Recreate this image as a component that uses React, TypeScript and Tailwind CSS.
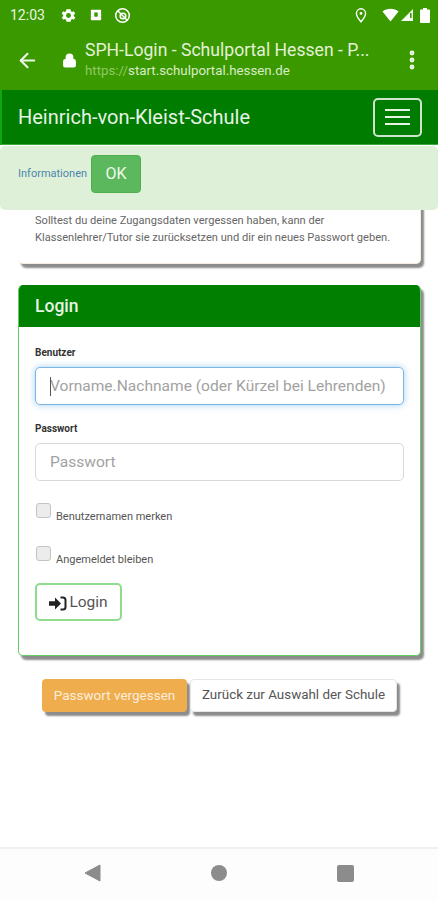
// App.tsx
import { ArrowLeft, Lock, MoreVertical } from "lucide-react";

const font = { fontFamily: "Roboto, 'Liberation Sans', sans-serif" };

function StatusBar() {
  return (
    <div className="h-[30px] bg-[#3b9900] flex items-center pl-[10px] pr-[8px] text-white">
      <span className="text-[14px] leading-none text-[#eaf5e0] w-[39px]">12:03</span>
      <svg className="ml-[11px]" width="17" height="17" viewBox="0 0 24 24" fill="#fff">
        <path d="M19.4 13a7.5 7.5 0 0 0 0-2l2.1-1.6-2-3.5-2.5 1a7.6 7.6 0 0 0-1.700-1L15 3.200h-6l-.4 2.700a7.6 7.6 0 0 0-1.700 1l-2.500-1-2 3.500L4.600 11a7.500 7.500 0 0 0 0 2l-2.100 1.600 2 3.500 2.500-1a7.600 7.600 0 0 0 1.700 1l.4 2.700h6l.4-2.700a7.600 7.600 0 0 0 1.700-1l2.500 1 2-3.500zM12 15.500a3.500 3.500 0 1 1 0-7 3.500 3.500 0 0 1 0 7z" />
      </svg>
      <svg className="ml-[13px]" width="12" height="12" viewBox="0 0 14 14">
        <rect x="1" y="1" width="12" height="12" rx="1" fill="#fff" />
        <rect x="5" y="4" width="4" height="5" fill="#3b9900" />
      </svg>
      <svg className="ml-[12px]" width="17" height="17" viewBox="0 0 18 18" fill="none" stroke="#fff" strokeWidth="1.6">
        <circle cx="9" cy="9" r="7.2" />
        <circle cx="9.500" cy="9.500" r="3" />
        <path d="M4 4l10 10" />
      </svg>
      <div className="ml-auto flex items-center">
        <svg width="14" height="16" viewBox="0 0 14 16" fill="none" stroke="#fff" strokeWidth="1.4">
          <path d="M7 14.800C4.500 11.600 2.400 9.200 2.400 6.400a4.600 4.600 0 0 1 9.200 0c0 2.800-2.100 5.200-4.600 8.400z" />
          <circle cx="7" cy="6.400" r="1.400" fill="#fff" stroke="none" />
        </svg>
        <svg className="ml-[14px]" width="17" height="14" viewBox="0 0 17 14" fill="#fff">
          <path d="M8.500 13.500L0.500 3.600C2.700 1.800 5.400 0.800 8.500 0.800s5.800 1 8 2.800z" />
        </svg>
        <svg className="ml-[1px]" width="14" height="14" viewBox="0 0 14 14" fill="#fff">
          <path d="M13 1v12H1z" opacity="0.95" />
          <rect x="10" y="5" width="1.600" height="5" fill="#3b9900" />
        </svg>
        <svg className="ml-[6px]" width="10" height="15" viewBox="0 0 10 15" fill="#fff">
          <path d="M3 0h4v1.500h2a1 1 0 0 1 1 1V14a1 1 0 0 1-1 1H1a1 1 0 0 1-1-1V2.500a1 1 0 0 1 1-1h2z" />
        </svg>
      </div>
    </div>
  );
}

function BrowserBar() {
  return (
    <div className="h-[60px] bg-[#3b9900] flex items-center text-white">
      <ArrowLeft className="ml-[16px] text-[#eef7e6]" size={23} strokeWidth={2.2} />
      <Lock className="ml-[23px] text-white" size={15} strokeWidth={2.5} fill="#fff" />
      <div className="ml-[8px] w-[288px] -mt-[3px]">
        <div className="text-[17.6px] leading-[20px] text-[#e3f1d8] whitespace-nowrap overflow-hidden">
          SPH-Login - Schulportal Hessen - P...
        </div>
        <div className="text-[13.3px] leading-[15px] mt-[3px] text-[#d8ecc8] whitespace-nowrap">
          <span className="text-[#8fca66]">https://</span>start.schulportal.hessen.de
        </div>
      </div>
      <MoreVertical className="ml-auto mr-[14px] text-[#eef7e6]" size={24} strokeWidth={2.8} />
    </div>
  );
}

function Navbar() {
  return (
    <div className="h-[55px] bg-[#007c00] border-l-2 border-[#12a512] border-b border-b-[#3da83d] flex items-center justify-between pl-[16px] pr-[16px]">
      <span className="text-[20px] text-[#e7f3e5] leading-none">Heinrich-von-Kleist-Schule</span>
      <div className="w-[49px] h-[39px] border-2 border-[#cfe4cb] rounded-[5px] flex flex-col items-center justify-center gap-[5px]">
        <span className="block w-[25px] h-[2px] bg-[#e7f3e5]" />
        <span className="block w-[25px] h-[2px] bg-[#e7f3e5]" />
        <span className="block w-[25px] h-[2px] bg-[#e7f3e5]" />
      </div>
    </div>
  );
}

function Alert() {
  return (
    <div className="absolute left-0 right-0 top-[146px] h-[64px] bg-[#dff0d8] rounded-[5px] flex items-start pl-[18px] pt-[9px]">
      <span className="text-[11px] text-[#4c87ad] mt-[12px] leading-[14px] w-[70px] whitespace-nowrap">Informationen</span>
      <button className="ml-[3px] w-[50px] h-[38px] bg-[#5cb85c] border border-[#4cae4c] rounded-[4px] text-[16px] text-[#eef8ee]">
        OK
      </button>
    </div>
  );
}

function Field({ label, placeholder, focused }: { label: string; placeholder: string; focused?: boolean }) {
  return (
    <div>
      <label className="block text-[10px] font-bold text-[#333] leading-[14px]">{label}</label>
      <div
        className={
          focused
            ? "relative mt-[7px] h-[38px] rounded-[5px] border border-[#7cb4e2] bg-white flex items-center pl-[14px] pt-[1px] shadow-[0_0_7px_rgba(102,175,233,0.6)]"
            : "relative mt-[7px] h-[38px] rounded-[5px] border border-[#d8d8d8] bg-white flex items-center pl-[14px] pt-[1px]"
        }
      >
        {focused && <span className="absolute left-[14px] top-[9px] h-[19px] w-px bg-[#555]" />}
        <span className="text-[15.55px] text-[#a2a2a2] whitespace-nowrap">{placeholder}</span>
      </div>
    </div>
  );
}

function Check({ label }: { label: string }) {
  return (
    <div className="flex items-start pl-px">
      <span className="block w-[15px] h-[15px] rounded-[3px] border border-[#c4c4c4] bg-[#ececec]" />
      <span className="ml-[5px] mt-[7px] text-[11px] leading-[14px] text-[#555]">{label}</span>
    </div>
  );
}

function LoginPanel() {
  return (
    <div className="mt-[21px] h-[371px] rounded-[5px] border border-[#63cf63] border-t-0 bg-white shadow-[3px_4px_2px_#8c8c8c] overflow-hidden">
      <div className="h-[42px] bg-[#007f00] flex items-center pl-[17px] -mx-px">
        <span className="text-[17.5px] font-medium text-[#e8f4e6]">Login</span>
      </div>
      <div className="pl-[16px] pr-[16px] pt-[19px]">
        <Field label="Benutzer" placeholder="Vorname.Nachname (oder Kürzel bei Lehrenden)" focused />
        <div className="mt-[17px]">
          <Field label="Passwort" placeholder="Passwort" />
        </div>
        <div className="mt-[22px]">
          <Check label="Benutzernamen merken" />
        </div>
        <div className="mt-[22px]">
          <Check label="Angemeldet bleiben" />
        </div>
        <button className="mt-[16px] w-[87px] h-[38px] pt-[2px] rounded-[5px] border-2 border-[#8fdc8f] flex items-center justify-center text-[15.5px] text-[#555]">
          <svg className="mr-[2px]" width="18" height="15" viewBox="0 0 18 15" fill="#222">
            <path d="M0 5.200h6V1.500l6 6-6 6V9.800H0z" />
            <path d="M11.500 1.500h2.500A2.500 2.500 0 0 1 16.500 4v7a2.500 2.500 0 0 1-2.500 2.500h-2.500" fill="none" stroke="#222" strokeWidth="2" />
          </svg>
          Login
        </button>
      </div>
    </div>
  );
}

function NavKeys() {
  return (
    <div className="h-[53px] bg-[#fdfdfd] border-t-2 border-[#f0f0f0] flex items-start pt-[15px]">
      <svg className="ml-[84px]" width="17" height="18" viewBox="0 0 17 18" fill="#8c8c8c">
        <path d="M16 1v16L1 9z" stroke="#8c8c8c" strokeLinejoin="round" />
      </svg>
      <span className="ml-[110px] block w-[16px] h-[16px] rounded-full bg-[#8c8c8c] mt-px" />
      <span className="ml-[110px] block w-[17px] h-[17px] rounded-[2px] bg-[#8c8c8c] mt-px" />
    </div>
  );
}

export default function App() {
  return (
    <div className="relative w-[438px] h-[900px] bg-white overflow-hidden flex flex-col" style={font}>
      <StatusBar />
      <BrowserBar />
      <Navbar />
      <Alert />
      <div className="flex-1 pl-[18px] pr-[17px]">
        <div className="mt-[16px] h-[103px] rounded-b-[5px] bg-white border-b border-r border-[#f3ebdc] shadow-[3px_4px_2px_#8c8c8c] flex flex-col justify-end pb-[17px] pl-[17px]">
          <p className="text-[11.1px] leading-[17px] text-[#666] whitespace-nowrap">
            Solltest du deine Zugangsdaten vergessen haben, kann der
            <br />
            Klassenlehrer/Tutor sie zurücksetzen und dir ein neues Passwort geben.
          </p>
        </div>
        <LoginPanel />
        <div className="mt-[23px] flex pl-[24px]">
          <button className="w-[145px] h-[33px] rounded-[4px] bg-[#f0ad4e] text-[13.5px] text-[#fbeedb] shadow-[3px_4px_2px_#8c8c8c]">
            Passwort vergessen
          </button>
          <button className="ml-[3px] w-[207px] h-[33px] rounded-[4px] bg-white border border-[#e6e6e6] text-[13.4px] text-[#555] shadow-[3px_4px_2px_#8c8c8c]">
            Zurück zur Auswahl der Schule
          </button>
        </div>
      </div>
      <NavKeys />
    </div>
  );
}
